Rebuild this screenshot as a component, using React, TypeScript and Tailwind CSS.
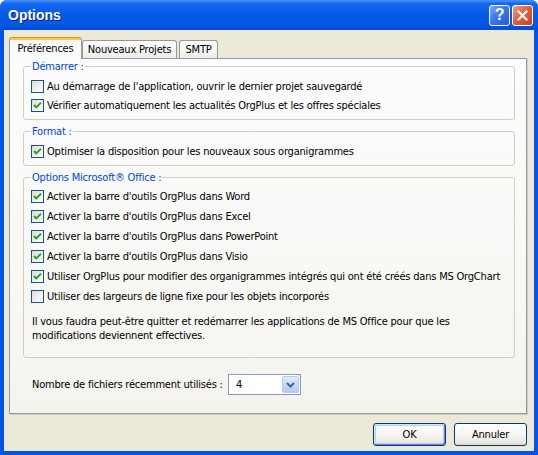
import React from 'react'

const FONT = "font-['DejaVu_Sans_Condensed','DejaVu_Sans',sans-serif]"

interface CheckProps {
  checked: boolean
  label: string
  rowHeight?: string
}

function CheckBox({ checked, label, rowHeight = 'h-[19px]' }: CheckProps) {
  return (
    <div className={`flex items-center ${rowHeight}`}>
      <span className="flex h-[13px] w-[13px] shrink-0 items-center justify-center border border-[#1C5180] bg-[linear-gradient(135deg,#DCDCD7_0%,#F2F2EE_60%,#FFFFFF_100%)]">
        {checked && (
          <svg width="11" height="11" viewBox="0 0 11 11">
            <path d="M2 5 L4.3 7.4 L9 2.6" fill="none" stroke="#21A121" strokeWidth="1.9" />
          </svg>
        )}
      </span>
      <span className="ml-[3px] whitespace-nowrap">{label}</span>
    </div>
  )
}

function Group({
  title,
  className = '',
  children,
}: {
  title: string
  className?: string
  children: React.ReactNode
}) {
  return (
    <fieldset className={`rounded-[3px] border border-[#D0D0BF] px-[7px] ${className}`}>
      <legend className="px-[1px] leading-[13px] text-[#0046D5]">{title}</legend>
      {children}
    </fieldset>
  )
}

function TitleButton({ kind }: { kind: 'help' | 'close' }) {
  const bg =
    kind === 'help'
      ? 'bg-[linear-gradient(135deg,#7DA8F8_0%,#3A78F0_45%,#2359D8_100%)]'
      : 'bg-[linear-gradient(135deg,#F0A08A_0%,#E2613E_45%,#C8401E_100%)]'
  return (
    <div
      className={`flex h-[21px] w-[21px] items-center justify-center rounded-[3px] border border-white ${bg}`}
    >
      {kind === 'help' ? (
        <span className="font-['Liberation_Sans',sans-serif] text-[16px] leading-none font-bold text-white">?</span>
      ) : (
        <svg width="11" height="11" viewBox="0 0 11 11">
          <path d="M1.5 1.5 L9.5 9.5 M9.5 1.5 L1.5 9.5" stroke="#FFFFFF" strokeWidth="2.2" strokeLinecap="square" />
        </svg>
      )}
    </div>
  )
}

export default function App() {
  return (
    <div className="h-[455px] w-[538px] bg-white">
      <div
        className={`flex h-[455px] w-[538px] flex-col rounded-t-[7px] bg-[#0055E5] text-[11px] leading-[13px] tracking-[-0.2px] text-black ${FONT}`}
      >
        {/* Title bar */}
        <div className="flex h-[30px] shrink-0 items-center justify-between rounded-t-[7px] bg-[linear-gradient(180deg,#4A95F8_0%,#1468EE_12%,#065AE8_45%,#0458E6_80%,#004BD8_100%)] pr-[5px] pl-[8px]">
          <span className="font-['Liberation_Sans',sans-serif] text-[14px] tracking-normal font-bold text-white [text-shadow:1px_1px_#0A1F8A]">
            Options
          </span>
          <div className="flex gap-[2px]">
            <TitleButton kind="help" />
            <TitleButton kind="close" />
          </div>
        </div>

        {/* Client area */}
        <div className="mx-[4px] mb-[4px] flex flex-1 flex-col bg-[#ECE9D8] pt-[7px] pr-[7px] pb-[5px] pl-[5px]">
          {/* Tabs */}
          <div className="flex h-[21px] items-end">
            <div className="relative z-10 -mb-[1px] flex h-[22px] w-[73px] flex-col rounded-t-[3px] border-x border-[#919B9C] bg-[#FCFCFE]">
              <div className="h-[3px] rounded-t-[3px] border-t border-[#E68B2C] bg-[#FFC73C]" />
              <div className="flex flex-1 items-center justify-center pb-[3px]">Préférences</div>
            </div>
            <div className="flex h-[18px] w-[95px] items-center justify-center rounded-t-[3px] border-x border-t border-[#919B9C] bg-[linear-gradient(180deg,#FFFFFF_0%,#F4F3EE_70%,#ECEBE6_100%)]">
              Nouveaux Projets
            </div>
            <div className="ml-[2px] flex h-[18px] w-[39px] items-center justify-center rounded-t-[3px] border-x border-t border-[#919B9C] bg-[linear-gradient(180deg,#FFFFFF_0%,#F4F3EE_70%,#ECEBE6_100%)]">
              SMTP
            </div>
          </div>

          {/* Tab panel */}
          <div className="flex h-[356px] flex-col border border-[#919B9C] bg-[linear-gradient(180deg,#FCFCFE_0%,#F8F8F5_60%,#F4F3EE_100%)] pt-[1px] pr-[11px] pl-[13px] shadow-[1px_1px_0_#D0CEBF]">
            <Group title="Démarrer :" className="pt-[4px] pb-[4px]">
              <CheckBox checked={false} label="Au démarrage de l'application, ouvrir le dernier projet sauvegardé" />
              <CheckBox checked label="Vérifier automatiquement les actualités OrgPlus et les offres spéciales" />
            </Group>

            <Group title="Format :" className="mt-[5px] pt-[4px] pb-[4px]">
              <CheckBox checked label="Optimiser la disposition pour les nouveaux sous organigrammes" />
            </Group>

            <Group title="Options Microsoft® Office :" className="mt-[5px] pt-[2px] pb-[14px]">
              <CheckBox checked rowHeight="h-[20px]" label="Activer la barre d'outils OrgPlus dans Word" />
              <CheckBox checked rowHeight="h-[20px]" label="Activer la barre d'outils OrgPlus dans Excel" />
              <CheckBox checked rowHeight="h-[20px]" label="Activer la barre d'outils OrgPlus dans PowerPoint" />
              <CheckBox checked rowHeight="h-[20px]" label="Activer la barre d'outils OrgPlus dans Visio" />
              <CheckBox
                checked
                rowHeight="h-[20px]"
                label="Utiliser OrgPlus pour modifier des organigrammes intégrés qui ont été créés dans MS OrgChart"
              />
              <CheckBox checked={false} rowHeight="h-[20px]" label="Utiliser des largeurs de ligne fixe pour les objets incorporés" />
              <p className="mt-[9px] ml-[1px] leading-[14px]">
                Il vous faudra peut-être quitter et redémarrer les applications de MS Office pour que les
                <br />
                modifications deviennent effectives.
              </p>
            </Group>

            <div className="mt-[16px] flex items-center pl-[9px]">
              <span className="w-[196px] whitespace-nowrap">Nombre de fichiers récemment utilisés :</span>
              <div className="flex h-[21px] w-[73px] items-center border border-[#7F9DB9] bg-white p-[1px]">
                <span className="flex-1 pl-[6px]">4</span>
                <span className="flex h-[17px] w-[17px] items-center justify-center rounded-[2px] border border-[#B5C9F5] bg-[linear-gradient(180deg,#E3ECFE_0%,#C8D8FB_50%,#B4C8F6_100%)]">
                  <svg width="9" height="6" viewBox="0 0 9 6">
                    <path d="M1 1 L4.5 4.5 L8 1" fill="none" stroke="#4D6185" strokeWidth="2" />
                  </svg>
                </span>
              </div>
            </div>
          </div>

          {/* Buttons */}
          <div className="mt-[9px] flex justify-end gap-[8px]">
            <button className="h-[23px] w-[73px] rounded-[3px] border border-[#003C74] bg-[linear-gradient(180deg,#FFFFFF_0%,#F5F4F0_55%,#E8E6DE_90%,#D6D0C5_100%)] shadow-[inset_1px_1px_0_#CEE7FF,inset_-1px_-1px_0_#6982EE,inset_0_0_0_2px_#B8CFF7]">
              OK
            </button>
            <button className="h-[23px] w-[73px] rounded-[3px] border border-[#003C74] bg-[linear-gradient(180deg,#FFFFFF_0%,#F5F4F0_55%,#E8E6DE_90%,#D6D0C5_100%)]">
              Annuler
            </button>
          </div>
        </div>
      </div>
    </div>
  )
}
